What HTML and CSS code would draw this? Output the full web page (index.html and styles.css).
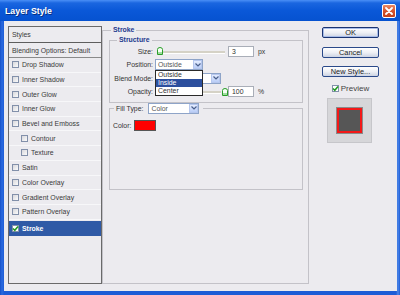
FILE: index.html
```html
<!DOCTYPE html>
<html>
  <head>
    <title>Layer Style</title>
    <link rel="stylesheet" href="styles.css">
  </head>
  <body>
    <div class="window">
      <div class="titlebar">
        <span class="title">Layer Style</span>
        <div class="close-btn">
          <svg width="8" height="8" viewBox="0 0 8 8"><path d="M1 1L7 7M7 1L1 7" stroke="#fff" stroke-width="1.8" stroke-linecap="round"/></svg>
        </div>
      </div>
      <div class="client">
        <div class="styles-list">
          <div class="list-head">Styles</div>
          <div class="list-blend">Blending Options: Default</div>
          <div class="list-item"><span class="check"></span>Drop Shadow</div>
          <div class="list-item"><span class="check"></span>Inner Shadow</div>
          <div class="list-item"><span class="check"></span>Outer Glow</div>
          <div class="list-item"><span class="check"></span>Inner Glow</div>
          <div class="list-item"><span class="check"></span>Bevel and Emboss</div>
          <div class="list-item sub"><span class="check"></span>Contour</div>
          <div class="list-item sub"><span class="check"></span>Texture</div>
          <div class="list-item"><span class="check"></span>Satin</div>
          <div class="list-item"><span class="check"></span>Color Overlay</div>
          <div class="list-item"><span class="check"></span>Gradient Overlay</div>
          <div class="list-item"><span class="check"></span>Pattern Overlay</div>
          <div class="list-item selected">
            <span class="check checked"><svg width="7" height="7" viewBox="0 0 7 7"><path d="M1 3.5L2.8 5.3L6 1.5" fill="none" stroke="#1e9a1e" stroke-width="1.5"/></svg></span>Stroke
          </div>
        </div>

        <fieldset class="group main-group">
          <legend>Stroke</legend>
          <fieldset class="group structure">
            <legend>Structure</legend>
            <div class="form-grid">
              <label>Size:</label>
              <div class="ctrl">
                <div class="slider"><span class="thumb"><svg width="6" height="8" viewBox="0 0 6 8"><path d="M0.5 2.5Q0.5 0.5 3 0.5Q5.5 0.5 5.5 2.5V7.5H0.5Z" fill="#f4fff4" stroke="#2a9d2a"/><rect x="1" y="5" width="4" height="2" fill="#9fdc9f"/></svg></span></div>
                <span class="field">3</span>
                <span class="unit">px</span>
              </div>

              <label>Position:</label>
              <div class="ctrl">
                <div class="select select-position">
                  <span class="select-text">Outside</span>
                  <span class="select-arrow"><svg width="6" height="4" viewBox="0 0 6 4"><path d="M0.5 0.5L3 3L5.5 0.5" fill="none" stroke="#4a5f8c" stroke-width="1.2"/></svg></span>
                  <div class="dropdown">
                    <div class="dropdown-item">Outside</div>
                    <div class="dropdown-item active">Inside</div>
                    <div class="dropdown-item">Center</div>
                  </div>
                </div>
              </div>

              <label>Blend Mode:</label>
              <div class="ctrl">
                <div class="select select-blend">
                  <span class="select-text"></span>
                  <span class="select-arrow"><svg width="6" height="4" viewBox="0 0 6 4"><path d="M0.5 0.5L3 3L5.5 0.5" fill="none" stroke="#4a5f8c" stroke-width="1.2"/></svg></span>
                </div>
              </div>

              <label>Opacity:</label>
              <div class="ctrl">
                <div class="slider slider-end"><span class="thumb"><svg width="6" height="8" viewBox="0 0 6 8"><path d="M0.5 2.5Q0.5 0.5 3 0.5Q5.5 0.5 5.5 2.5V7.5H0.5Z" fill="#f4fff4" stroke="#2a9d2a"/><rect x="1" y="5" width="4" height="2" fill="#9fdc9f"/></svg></span></div>
                <span class="field">100</span>
                <span class="unit">%</span>
              </div>
            </div>
          </fieldset>

          <fieldset class="group fill">
            <legend>
              <span class="fill-label">Fill Type:</span>
              <span class="select select-fill">
                <span class="select-text">Color</span>
                <span class="select-arrow"><svg width="6" height="4" viewBox="0 0 6 4"><path d="M0.5 0.5L3 3L5.5 0.5" fill="none" stroke="#4a5f8c" stroke-width="1.2"/></svg></span>
              </span>
            </legend>
            <div class="color-row">
              <span>Color:</span>
              <span class="swatch"></span>
            </div>
          </fieldset>
        </fieldset>

        <div class="buttons">
          <div class="btn default">OK</div>
          <div class="btn">Cancel</div>
          <div class="btn">New Style...</div>
          <div class="preview-row">
            <span class="check checked"><svg width="7" height="7" viewBox="0 0 7 7"><path d="M1 3.5L2.8 5.3L6 1.5" fill="none" stroke="#1e9a1e" stroke-width="1.5"/></svg></span>
            <span>Preview</span>
          </div>
          <div class="preview-box">
            <div class="preview-swatch"></div>
          </div>
        </div>
      </div>
    </div>
  </body>
</html>
```

FILE: styles.css
```css
body {
  margin: 0;
  width: 400px;
  height: 295px;
  overflow: hidden;
  background: #0b4fcc;
  font-family: "Liberation Sans", Arial, sans-serif;
  font-size: 6.9px;
  color: #333;
}
.window {
  box-sizing: border-box;
  height: 295px;
  padding: 0 3px 4px 4px;
  display: flex;
  flex-direction: column;
  background: linear-gradient(to right, #1650c8, #2a6ae0 2px, #1d5cd6 4px, #1d5cd6 396px, #4d86e8 398px, #1d5cd6);
}
.titlebar {
  height: 21px;
  margin: 0 -3px 0 -4px;
  padding: 0 4px 0 5px;
  display: flex;
  align-items: center;
  justify-content: space-between;
  background: linear-gradient(#4a8ff6, #1a66e0 3px, #0a58d8 50%, #0652d0);
}
.title {
  color: #fff;
  font-weight: bold;
  font-size: 8.8px;
  text-shadow: 1px 1px 0 #0a2f80;
}
.close-btn {
  width: 14px;
  height: 14px;
  margin-top: 1px;
  box-sizing: border-box;
  border: 1px solid #fff;
  border-radius: 2px;
  background: linear-gradient(#eb8a66, #d6532c 50%, #c2421c);
  display: flex;
  align-items: center;
  justify-content: center;
}
.client {
  flex: 1;
  background: #ecebef;
  display: flex;
  align-items: flex-start;
  padding: 4px 0 0 4px;
}

/* styles list */
.styles-list {
  box-sizing: border-box;
  width: 94px;
  height: 258px;
  margin-top: 1px;
  border: 1px solid #6a6a6a;
  background: #ecebef;
  color: #3a3a3a;
}
.list-head, .list-blend {
  box-sizing: border-box;
  display: flex;
  align-items: center;
  padding-left: 3px;
  border-bottom: 1px solid #5e5e5e;
}
.list-head { height: 16px; }
.list-blend { height: 15px; border-bottom-color: #8a8a8a; }
.list-item {
  box-sizing: border-box;
  height: 14.7px;
  display: flex;
  align-items: center;
  gap: 3px;
  padding-left: 3px;
  border-bottom: 1px solid #f7f7f9;
}
.list-item.sub { padding-left: 12px; }
.list-item.selected {
  height: 15px;
  margin-top: 1px;
  background: #2f5aa6;
  color: #fff;
  font-weight: bold;
  border-bottom: none;
}
.check {
  box-sizing: border-box;
  width: 7px;
  height: 7px;
  border: 1px solid #8290aa;
  background: linear-gradient(135deg, #d8d8dc, #fbfbfb);
  display: flex;
  align-items: center;
  justify-content: center;
}
.check.checked {
  width: 7px;
  height: 7px;
  background: #fff;
}
.check svg { flex: none; }

/* groups */
fieldset.group {
  margin: 0;
  min-width: 0;
  border: 1px solid #c3c2c8;
}
.group legend {
  font-weight: bold;
  color: #1c3a8e;
  line-height: 10px;
  padding: 0 2px;
}
.main-group {
  box-sizing: border-box;
  width: 207px;
  height: 259px;
  margin-left: 11px;
  padding: 0 5px 0 6px;
}
.main-group > legend { margin-left: 2px; }
.structure {
  padding: 0.5px 0 4.5px 0;
}
.structure > legend { margin-left: 7px; }
.form-grid {
  display: grid;
  grid-template-columns: 43px auto;
  grid-auto-rows: 11px;
  column-gap: 2px;
  row-gap: 2.5px;
  align-items: center;
}
.form-grid label { text-align: right; }
.ctrl {
  display: flex;
  align-items: center;
  height: 11px;
}
.slider {
  width: 73px;
  height: 11px;
  display: flex;
  align-items: center;
  padding-left: 2px;
  box-sizing: border-box;
  background: linear-gradient(to bottom, transparent 5px, #d5d2c6 5px, #d5d2c6 7px, #fff 7px, #fff 8px, transparent 8px) no-repeat 4px 0 / 66px 11px;
}
.slider-end {
  justify-content: flex-end;
  padding: 0 0 0 0;
  background-position: 0 0;
}
.thumb { display: flex; }
.field {
  box-sizing: border-box;
  width: 26px;
  height: 11px;
  border: 1px solid #a9aeb8;
  background: #fff;
  padding-left: 3px;
  line-height: 9px;
  color: #333;
}
.unit { margin-left: 4px; }
.select {
  position: relative;
  box-sizing: border-box;
  height: 11px;
  display: flex;
  border: 1px solid #8ea4c8;
  background: #fff;
}
.select-position { width: 48px; }
.select-blend { width: 66px; }
.select-fill { width: 51px; }
.select-text {
  flex: 1;
  padding-left: 2px;
  line-height: 9px;
  color: #555;
  font-weight: normal;
}
.select-arrow {
  width: 9px;
  border: 1px solid #b6c7ee;
  box-sizing: border-box;
  background: linear-gradient(#e4ecfe, #b9cdf7);
  display: flex;
  align-items: center;
  justify-content: center;
}
.dropdown {
  position: absolute;
  left: -1px;
  top: 10px;
  width: 48px;
  box-sizing: border-box;
  border: 1px solid #2a2a2a;
  background: #fff;
  z-index: 2;
}
.dropdown-item {
  height: 8px;
  line-height: 8px;
  padding-left: 2px;
  color: #333;
}
.dropdown-item.active {
  background: #2c4f9e;
  color: #fff;
}
.fill {
  margin-top: 4px;
  padding: 6px 0 58px 3px;
}
.fill > legend {
  display: flex;
  align-items: center;
  gap: 5px;
  margin-left: 1px;
  padding: 0 4px 0 2px;
  line-height: 11px;
}
.fill-label {
  font-weight: normal;
  color: #333;
}
.color-row {
  display: flex;
  align-items: center;
  gap: 3px;
  height: 11px;
}
.swatch {
  box-sizing: border-box;
  width: 22px;
  height: 11px;
  border: 1px solid #555;
  background: #ff0000;
}

/* buttons column */
.buttons {
  width: 57px;
  margin: 2px 0 0 13px;
  display: flex;
  flex-direction: column;
  align-items: center;
}
.btn {
  box-sizing: border-box;
  width: 57px;
  height: 11px;
  margin-bottom: 8.5px;
  border: 1px solid #2b4a8a;
  border-radius: 2px;
  background: linear-gradient(#ffffff, #eef0f5 50%, #cdd4e3);
  text-align: center;
  font-size: 7.4px;
  line-height: 9px;
  color: #222;
}
.btn.default {
  border-color: #1a3472;
  box-shadow: inset 0 0 0 1px #a9bde8;
}
.preview-row {
  display: flex;
  align-items: center;
  gap: 2px;
  margin-top: -1.5px;
  font-size: 8px;
  color: #444;
}
.preview-box {
  box-sizing: border-box;
  width: 45px;
  height: 45px;
  margin-top: 5px;
  margin-right: 2px;
  background: #d6d6d9;
  border: 1px solid #c6c6ca;
  display: flex;
  align-items: center;
  justify-content: center;
}
.preview-swatch {
  box-sizing: border-box;
  width: 25px;
  height: 25px;
  background: #565656;
  border: 2px solid #f21818;
  box-shadow: 0 0 0 1px #8a8a8a;
}
```
